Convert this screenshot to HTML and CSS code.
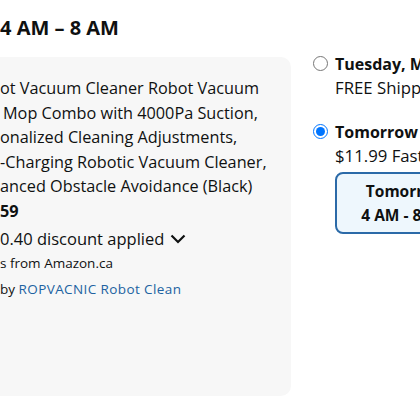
FILE: index.html
```html
<!DOCTYPE html>
<html>
<head>
<meta charset="utf-8">
<link rel="stylesheet" href="styles.css">
</head>
<body>
<div class="page">
  <h2 class="title">4 AM – 8 AM</h2>
  <div class="row">
    <div class="card">
      <div class="line">ot Vacuum Cleaner Robot Vacuum</div>
      <div class="line indent"> Mop Combo with 4000Pa Suction,</div>
      <div class="line">onalized Cleaning Adjustments,</div>
      <div class="line">-Charging Robotic Vacuum Cleaner,</div>
      <div class="line">anced Obstacle Avoidance (Black)</div>
      <div class="line price">59</div>
      <div class="discount">0.40 discount applied
        <svg class="chev" width="16" height="10" viewBox="0 0 16 10"><path d="M1.5 1.5 L8 8 L14.5 1.5" fill="none" stroke="#0f1111" stroke-width="2.2"/></svg>
      </div>
      <div class="small">s from Amazon.ca</div>
      <div class="small">by <span class="link">ROPVACNIC Robot Clean</span></div>
    </div>
    <div class="options">
      <label class="opt">
        <input type="radio" name="d">
        <span class="optText"><b>Tuesday, March 5</b><span class="sub">FREE Shipping</span></span>
      </label>
      <label class="opt">
        <input type="radio" name="d" checked>
        <span class="optText"><b>Tomorrow 4 AM - 8 AM</b><span class="sub">$11.99 Fast Delivery</span>
          <span class="slot"><b>Tomorrow</b><span>4 AM - 8 AM</span></span>
        </span>
      </label>
    </div>
  </div>
</div>
</body>
</html>
```
FILE: styles.css
```css
html, body {
  margin: 0;
  padding: 0;
  background: #fff;
  overflow: hidden;
}
body {
  font-family: "Open Sans", "Noto Sans", sans-serif;
  color: #0f1111;
  width: 420px;
  height: 420px;
}
.page {
  padding-top: 14px;
}
.title {
  margin: 0;
  font-size: 20px;
  line-height: 28px;
  font-weight: 700;
}
.row {
  display: flex;
  margin-top: 15px;
  align-items: flex-start;
}
.card {
  flex: 0 0 auto;
  width: 301px;
  margin-left: -10px;
  padding: 19px 0 0 10px;
  box-sizing: border-box;
  height: 339px;
  background: #f7f7f7;
  border-radius: 10px;
  font-size: 16.25px;
  line-height: 24.5px;
}
.line {
  white-space: nowrap;
}
.indent {
  padding-left: 3px;
}
.price {
  font-weight: 700;
}
.discount {
  margin-top: 4px;
  font-size: 16.5px;
  line-height: 24px;
  display: flex;
  align-items: center;
  gap: 6px;
}
.small {
  font-size: 13.5px;
  line-height: 25.5px;
  white-space: nowrap;
}
.link {
  color: #2162a1;
  letter-spacing: 0.4px;
}
.options {
  margin-left: 22px;
  margin-top: -5px;
  display: flex;
  flex-direction: column;
  gap: 20px;
}
.opt {
  display: flex;
  align-items: flex-start;
  gap: 7px;
}
.opt input {
  margin: 0;
  margin-top: 4px;
  width: 15px;
  height: 15px;
  flex: 0 0 auto;
}
.optText {
  display: flex;
  flex-direction: column;
  font-size: 16px;
  line-height: 24px;
  white-space: nowrap;
}
.sub {
  font-weight: 400;
  font-size: 16.75px;
}
.slot {
  margin-top: 4px;
  width: 142px;
  height: 62px;
  box-sizing: border-box;
  border: 2.5px solid #2b6aa8;
  border-radius: 8px;
  background: #eef7fd;
  display: flex;
  flex-direction: column;
  align-items: center;
  justify-content: center;
  font-size: 15.5px;
  line-height: 24px;
}
.slot span {
  font-weight: 700;
}
```
